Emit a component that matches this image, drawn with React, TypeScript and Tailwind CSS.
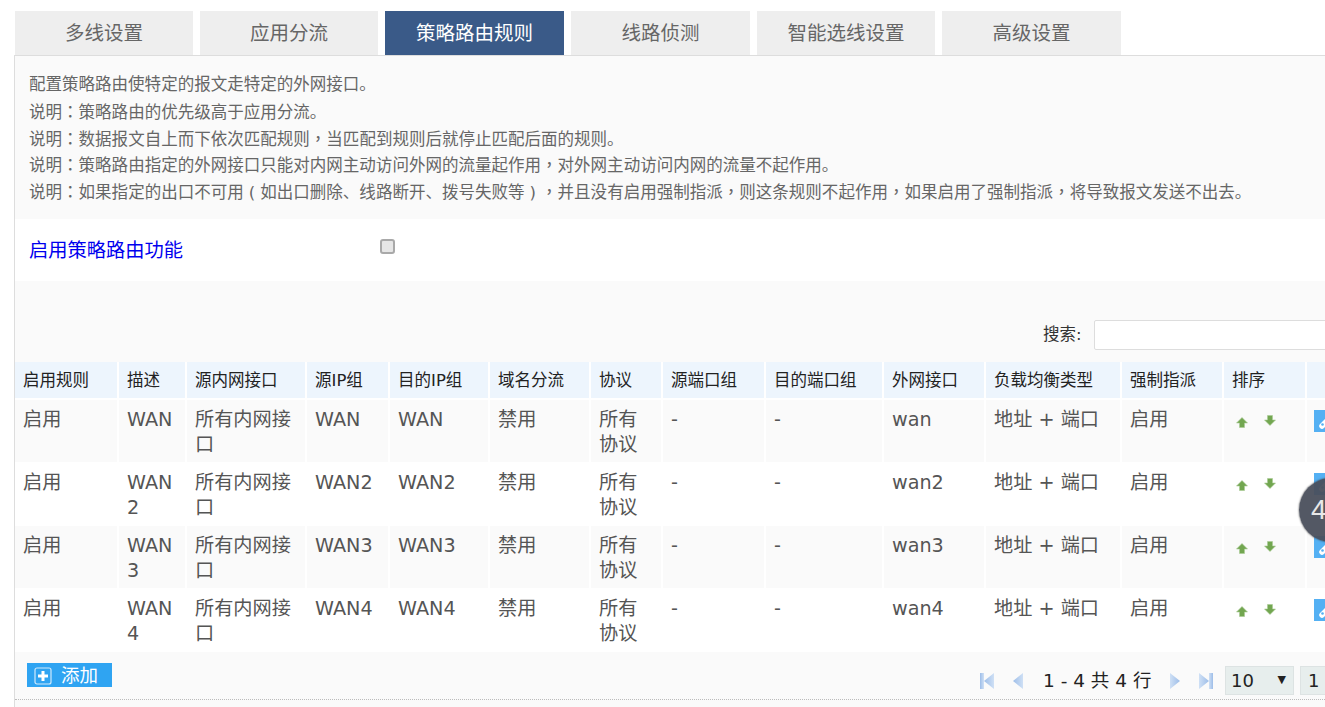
import React from "react";

const FONT = '"DejaVu Sans", "Noto Sans CJK SC", sans-serif';
const tabs = [
  { t: "多线设置", w: "w-[178px]" },
  { t: "应用分流", w: "w-[178px]" },
  { t: "策略路由规则", w: "w-[179px]" },
  { t: "线路侦测", w: "w-[179px]" },
  { t: "智能选线设置", w: "w-[178px]" },
  { t: "高级设置", w: "w-[179px]" },
];
const lines = [
  "配置策略路由使特定的报文走特定的外网接口。",
  "说明：策略路由的优先级高于应用分流。",
  "说明：数据报文自上而下依次匹配规则，当匹配到规则后就停止匹配后面的规则。",
  "说明：策略路由指定的外网接口只能对内网主动访问外网的流量起作用，对外网主动访问内网的流量不起作用。",
  "说明：如果指定的出口不可用（如出口删除、线路断开、拨号失败等），并且没有启用强制指派，则这条规则不起作用，如果启用了强制指派，将导致报文发送不出去。",
];
const headers = ["启用规则", "描述", "源内网接口", "源IP组", "目的IP组", "域名分流", "协议", "源端口组", "目的端口组", "外网接口", "负载均衡类型", "强制指派", "排序", ""];
const widths = [104, 68, 120, 83, 100, 101, 72, 103, 118, 102, 136, 102, 83, 60];
const rows = [
  ["WAN", "WAN", "WAN", "wan"],
  ["WAN 2", "WAN2", "WAN2", "wan2"],
  ["WAN 3", "WAN3", "WAN3", "wan3"],
  ["WAN 4", "WAN4", "WAN4", "wan4"],
];

function Punct({ text }: { text: string }) {
  const parts = text.split(/([：，（）])/);
  return (
    <>
      {parts.map((p, i) => {
        if (p === "：" || p === "，") {
          return (
            <span key={i} className="font-['Noto_Sans_CJK_TC']">
              {p}
            </span>
          );
        }
        if (p === "（" || p === "）") {
          return (
            <span key={i} className="inline-block w-[1em] text-center">
              {p === "（" ? "(" : ")"}
            </span>
          );
        }
        return <span key={i}>{p}</span>;
      })}
    </>
  );
}

function Arrow({ down }: { down?: boolean }) {
  return (
    <svg width="12" height="11" viewBox="0 0 12 11" className={down ? "" : "mt-[2px]"}>
      <path
        d={down ? "M3.500 .5h5v4.500H11.500L6 10.500 .5 5H3.500z" : "M3.500 10.500h5V6H11.500L6 .5 .5 6H3.500z"}
        fill="#72a650"
        stroke="#a9cb94"
        strokeWidth="0.6"
      />
    </svg>
  );
}

function PagerIcon({ dir, end }: { dir: "l" | "r"; end?: boolean }) {
  const pts = dir === "l" ? "12,1 12,17 2,9" : "2,1 2,17 12,9";
  return (
    <svg width={end ? 16 : 14} height="18" viewBox={end ? "0 0 16 18" : "0 0 14 18"}>
      <defs>
        <linearGradient id={`g${dir}${end ? 1 : 0}`} x1="0" y1="0" x2="1" y2="0">
          <stop offset="0" stopColor={dir === "l" ? "#9dbde8" : "#cfe0f5"} />
          <stop offset="1" stopColor={dir === "l" ? "#cfe0f5" : "#9dbde8"} />
        </linearGradient>
      </defs>
      {end ? (
        <g fill={`url(#g${dir}1)`}>
          <polygon points={dir === "l" ? "15,1 15,17 5,9" : "1,1 1,17 11,9"} />
          <rect x={dir === "l" ? 1 : 11} y="1" width="4" height="16" />
        </g>
      ) : (
        <polygon points={pts} fill={`url(#g${dir}0)`} />
      )}
    </svg>
  );
}

export default function App() {
  return (
    <div className="relative h-[707px] w-[1325px] overflow-hidden bg-white" style={{ fontFamily: FONT }}>
      <div className="flex gap-[7px] pl-[15px] pt-[11px]">
        {tabs.map((tab, i) => (
          <div
            key={tab.t}
            className={`flex h-[44px] ${tab.w} items-center justify-center pt-[2px] text-[19.5px] ${
              i === 2 ? "bg-[#3a5a88] text-white" : "bg-[#eeeeee] text-[#666666]"
            }`}
          >
            {tab.t}
          </div>
        ))}
      </div>

      <div className="ml-[14px] h-[652px] border-l border-t border-[#dddddd] bg-[#fafafa]">
        <div className="h-[163px] pl-[14px] pt-[15px] text-[16.53px] leading-[27px] text-[#666666]">
          {lines.map((l) => (
            <div key={l} className="h-[26.75px] whitespace-nowrap">
              <Punct text={l} />
            </div>
          ))}
        </div>

        <div className="flex h-[62px] items-center bg-white pl-[14px]">
          <span className="w-[351px] pt-[2px] text-[19.25px] text-[#0000ee]">启用策略路由功能</span>
          <span className="mb-[8px] h-[15px] w-[15px] rounded-[3px] border-2 border-[#a9a9a9] bg-[#e6e6e6]" />
        </div>

        <div className="flex h-[69px] items-end pl-[1028px]">
          <span className="mr-[13px] w-[38px] shrink-0 whitespace-nowrap pt-[1px] text-[16.53px] leading-[30px] text-[#333333]">搜索:</span>
          <div className="h-[30px] w-[240px] shrink-0 rounded-[2px] border border-[#dddddd] bg-white" />
        </div>

        <div className="h-[12px]" />

        <table className="w-[1352px] table-fixed border-separate border-spacing-0">
          <colgroup>
            {widths.map((w, i) => (
              <col key={i} style={{ width: w }} />
            ))}
          </colgroup>
          <thead>
            <tr className="h-[38px] bg-[#edf5fd]">
              {headers.map((h, i) => (
                <th key={i} className="border-r-2 border-b-2 border-white px-[8px] pt-[3px] text-left text-[16.53px] font-normal text-[#222222]">
                  {h}
                </th>
              ))}
            </tr>
          </thead>
          <tbody className="text-[19.2px] leading-[25px] text-[#555555]">
            {rows.map((r, idx) => {
              const cells = ["启用", r[0], "所有内网接口", r[1], r[2], "禁用", "所有协议", "-", "-", r[3], "地址 + 端口", "启用"];
              return (
                <tr key={idx} className={`h-[63px] ${idx % 2 === 0 ? "bg-[#fafafa]" : "bg-white"}`}>
                  {cells.map((c, i) => (
                    <td key={i} className="border-r-2 border-b border-white pl-[8px] pr-[6px] pt-[7px] pb-[3px] align-top break-words">
                      {c}
                    </td>
                  ))}
                  <td className="border-r-2 border-b border-white pl-[12px] align-top">
                    <div className="flex gap-[16px] pt-[15px]">
                      <Arrow />
                      <Arrow down />
                    </div>
                  </td>
                  <td className="border-b border-white pl-[7px] pt-[10px] align-top">
                    <div className="h-[22px] w-[22px] bg-[#54b0f3]">
                      <svg width="22" height="22" viewBox="0 0 22 22">
                        <path d="M8 16 L17 7" stroke="#ffffff" strokeWidth="5.500" strokeLinecap="round" />
                        <circle cx="8.500" cy="14.500" r="1.300" fill="#54b0f3" />
                      </svg>
                    </div>
                  </td>
                </tr>
              );
            })}
          </tbody>
        </table>

        <div className="flex h-[48px] items-start border-b border-dotted border-[#bbbbbb]">
          <button className="ml-[12px] mt-[11px] flex h-[24px] w-[85px] shrink-0 items-center bg-[#2fa4f2] pl-[7px] pt-[1px] text-[18.5px] text-white">
            <svg width="18" height="18" viewBox="0 0 18 18" className="mr-[9px]">
              <rect x="1" y="1" width="16" height="16" rx="2" fill="none" stroke="#cfe9fc" strokeWidth="1.2" />
              <path d="M7.500 4h3v3.500H14v3h-3.500V14h-3v-3.500H4v-3h3.500z" fill="#ffffff" />
            </svg>
            添加
          </button>
          <div className="ml-[867px] mt-[14px] flex shrink-0 items-center">
            <PagerIcon dir="l" end />
            <span className="w-[16px]" />
            <PagerIcon dir="l" />
            <span className="ml-[18px] mr-[15px] w-[110px] whitespace-pre text-[18.5px] text-[#222222]">1 - 4 共 4 行</span>
            <PagerIcon dir="r" />
            <span className="w-[16px]" />
            <PagerIcon dir="r" end />
            <div className="ml-[11px] flex h-[29px] w-[69px] items-center justify-between border border-[#dde3e3] bg-[#e7eeed] pl-[5px] pr-[7px] text-[18px] text-[#222222]">
              <span>10</span>
              <span className="text-[11px]">▼</span>
            </div>
            <div className="ml-[6px] flex h-[29px] w-[60px] items-center border border-[#dde3e3] bg-[#e7eeed] pl-[7px] text-[18px] text-[#222222]">
              1
            </div>
          </div>
        </div>
      </div>

      <div className="absolute left-[1299px] top-[478px] flex h-[64px] w-[64px] items-center rounded-full bg-[#4a4f5c]/95 pl-[12px] font-['Liberation_Sans'] text-[28px] text-[#e8e8e8] shadow-[0_0_2px_#333]">
        4
      </div>
    </div>
  );
}
